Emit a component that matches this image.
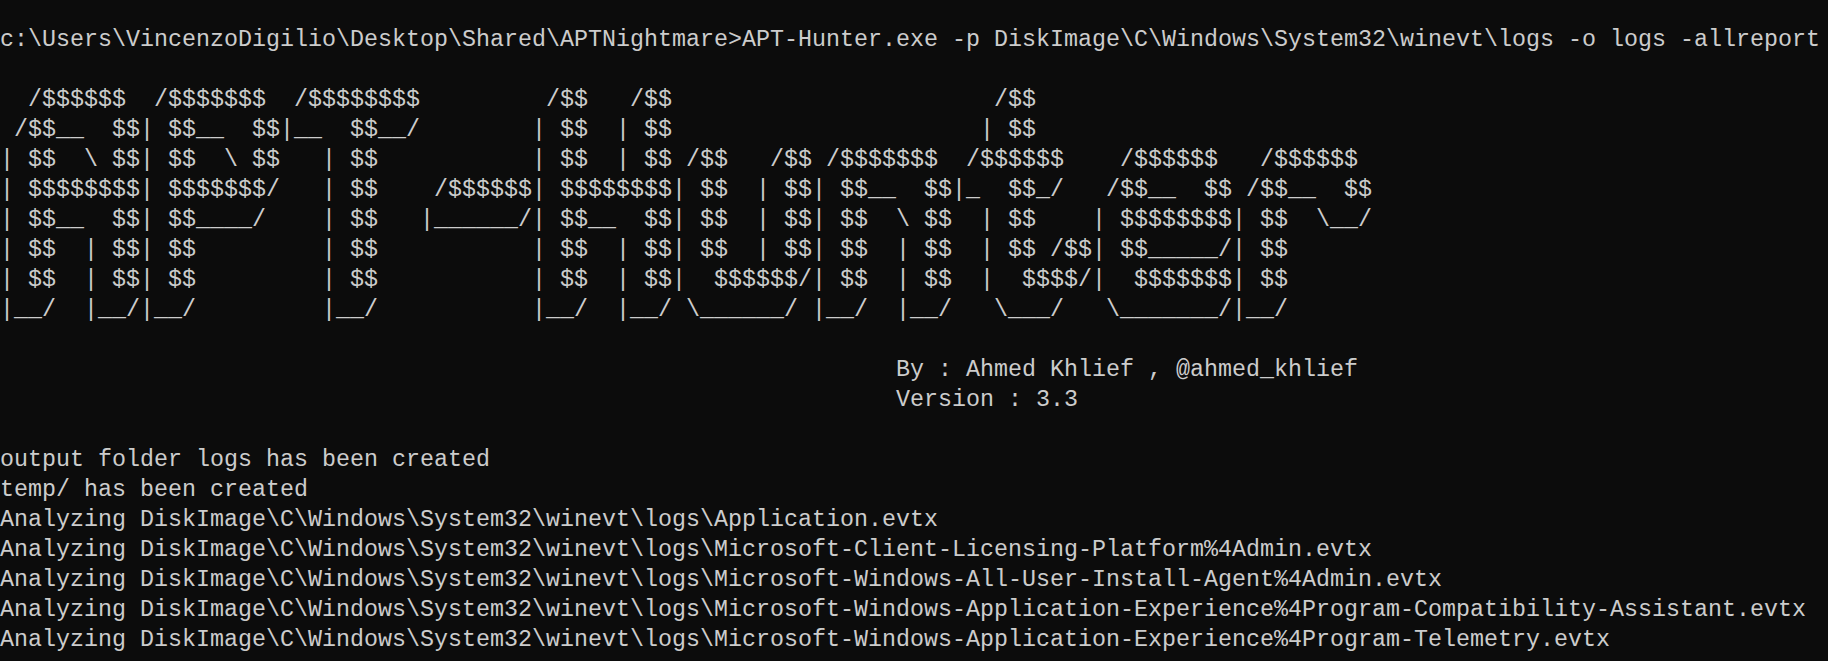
const logo = [
  "  /$$$$$$  /$$$$$$$  /$$$$$$$$         /$$   /$$                       /$$",
  " /$$__  $$| $$__  $$|__  $$__/        | $$  | $$                      | $$",
  "| $$  \\ $$| $$  \\ $$   | $$           | $$  | $$ /$$   /$$ /$$$$$$$  /$$$$$$    /$$$$$$   /$$$$$$",
  "| $$$$$$$$| $$$$$$$/   | $$    /$$$$$$| $$$$$$$$| $$  | $$| $$__  $$|_  $$_/   /$$__  $$ /$$__  $$",
  "| $$__  $$| $$____/    | $$   |______/| $$__  $$| $$  | $$| $$  \\ $$  | $$    | $$$$$$$$| $$  \\__/",
  "| $$  | $$| $$         | $$           | $$  | $$| $$  | $$| $$  | $$  | $$ /$$| $$_____/| $$",
  "| $$  | $$| $$         | $$           | $$  | $$|  $$$$$$/| $$  | $$  |  $$$$/|  $$$$$$$| $$",
  "|__/  |__/|__/         |__/           |__/  |__/ \\______/ |__/  |__/   \\___/   \\_______/|__/",
];

const lines = [
  "c:\\Users\\VincenzoDigilio\\Desktop\\Shared\\APTNightmare>APT-Hunter.exe -p DiskImage\\C\\Windows\\System32\\winevt\\logs -o logs -allreport",
  "",
  ...logo,
  "",
  "                                                                By : Ahmed Khlief , @ahmed_khlief",
  "                                                                Version : 3.3",
  "",
  "output folder logs has been created",
  "temp/ has been created",
  "Analyzing DiskImage\\C\\Windows\\System32\\winevt\\logs\\Application.evtx",
  "Analyzing DiskImage\\C\\Windows\\System32\\winevt\\logs\\Microsoft-Client-Licensing-Platform%4Admin.evtx",
  "Analyzing DiskImage\\C\\Windows\\System32\\winevt\\logs\\Microsoft-Windows-All-User-Install-Agent%4Admin.evtx",
  "Analyzing DiskImage\\C\\Windows\\System32\\winevt\\logs\\Microsoft-Windows-Application-Experience%4Program-Compatibility-Assistant.evtx",
  "Analyzing DiskImage\\C\\Windows\\System32\\winevt\\logs\\Microsoft-Windows-Application-Experience%4Program-Telemetry.evtx",
];

const App = () => {
  return (
    <div className="h-screen overflow-hidden bg-[#0c0c0c] pt-[25px] font-['Liberation_Mono',monospace] text-[23.33px] leading-[30px] text-[#cccccc]">
      {lines.map((line, i) => (
        <div key={i} className="h-[30px] whitespace-pre">
          {line}
        </div>
      ))}
    </div>
  );
};

export default App;
